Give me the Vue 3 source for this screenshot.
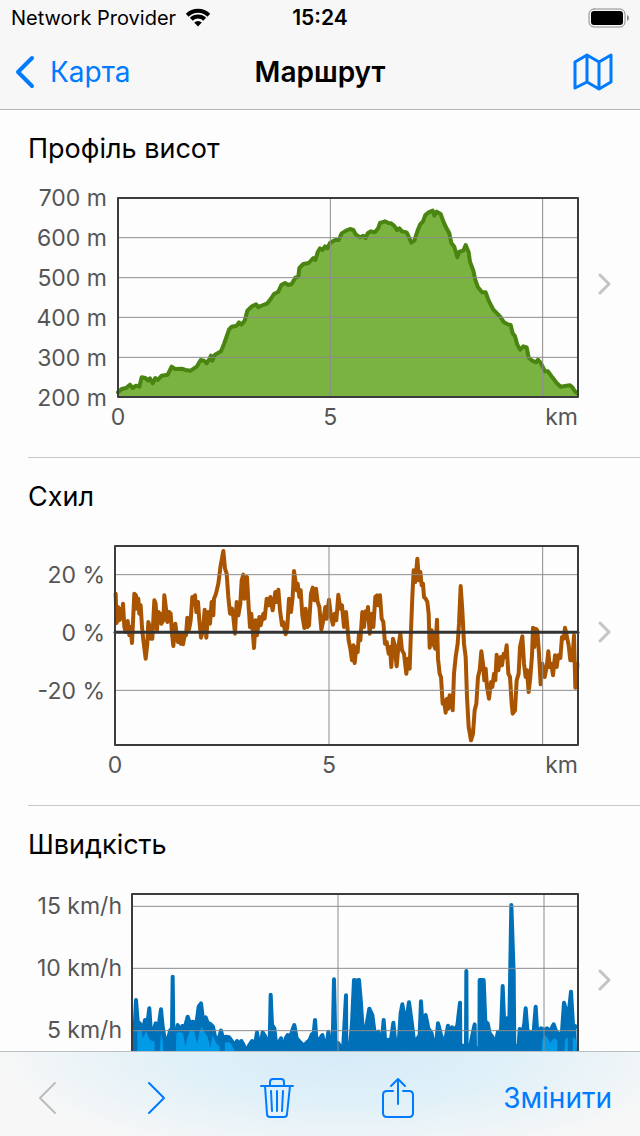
<script setup>
const elevationLine =
  '0,583 11,573 24,570 36,560 44,570 54,563 64,566 71,538 82,540 90,548 96,541 104,556 112,540 119,546 131,533 149,530 161,506 171,513 191,512 203,516 218,518 236,506 248,486 258,488 266,496 274,483 279,473 283,488 291,470 309,460 318,438 333,395 341,386 356,383 363,373 370,380 380,368 388,338 402,325 414,319 421,328 428,324 448,316 458,303 468,288 481,281 490,261 501,255 511,261 521,258 532,239 541,236 544,210 556,198 572,195 586,180 592,186 599,163 606,151 614,156 621,145 628,151 636,135 651,126 662,126 671,106 684,98 696,93 706,96 714,110 726,118 736,113 743,120 749,106 759,100 771,103 781,90 786,75 801,70 811,75 819,76 828,83 837,96 844,91 852,100 866,103 874,120 880,134 889,128 898,100 906,80 915,70 922,51 932,43 944,38 949,53 956,41 968,48 976,70 984,88 994,106 1000,135 1009,146 1018,178 1024,161 1036,158 1043,141 1052,163 1056,191 1066,218 1072,246 1080,268 1092,283 1103,283 1112,308 1126,335 1146,355 1158,373 1169,379 1178,381 1184,406 1191,415 1198,440 1206,455 1216,445 1226,448 1232,478 1242,488 1254,493 1260,485 1269,496 1281,520 1290,520 1303,538 1316,555 1328,566 1341,564 1356,562 1363,568 1371,580 1377,585'

const slopeLine =
  '2,143 5,231 9,183 13,223 17,188 21,218 24,173 28,243 32,258 38,225 43,268 47,243 51,291 58,143 63,148 66,188 70,158 73,203 77,178 81,243 85,283 92,338 97,293 100,228 104,243 107,278 112,278 118,163 122,173 126,251 130,198 135,203 139,233 145,223 148,148 153,188 157,228 162,198 167,203 171,263 175,300 181,233 185,268 189,288 193,268 197,293 201,263 204,295 210,263 213,268 217,215 222,251 227,223 232,153 236,173 240,148 244,198 249,168 253,223 258,275 264,253 269,191 274,275 279,198 285,233 290,168 295,208 297,158 303,143 310,113 317,58 325,15 330,68 335,83 340,153 345,203 351,188 355,213 360,263 365,168 370,208 376,173 380,103 385,86 388,158 391,103 396,93 401,183 405,243 409,203 413,253 417,306 422,223 426,268 433,213 437,238 445,203 449,218 455,158 461,178 466,153 473,193 481,138 485,168 490,131 495,193 501,238 505,228 512,265 517,243 522,158 528,198 533,153 537,75 541,103 545,133 548,113 553,153 557,133 562,208 568,246 572,188 577,243 582,238 588,143 593,125 598,163 603,128 608,168 613,183 619,251 625,223 631,183 635,218 642,161 648,213 654,236 659,203 664,223 670,146 676,188 681,178 687,243 693,198 701,283 706,308 711,343 715,298 719,351 724,303 728,318 732,263 736,283 742,198 747,243 752,196 756,218 759,183 764,263 771,203 775,243 781,153 786,148 789,178 795,148 800,218 805,228 810,293 815,288 821,323 825,303 829,363 834,278 839,298 845,361 850,303 856,263 861,313 867,323 874,383 879,338 884,368 888,253 892,153 896,73 901,108 907,38 912,103 916,78 920,118 924,113 927,153 932,158 937,168 941,203 944,305 950,253 955,293 961,308 966,221 969,338 974,383 978,393 983,473 987,463 992,500 996,458 1000,488 1004,448 1009,463 1013,493 1017,383 1022,333 1028,293 1032,233 1037,120 1042,193 1047,293 1052,333 1056,453 1061,543 1068,583 1074,563 1079,493 1084,473 1089,393 1094,373 1099,316 1104,353 1108,403 1112,368 1116,423 1122,458 1128,408 1132,423 1137,383 1141,403 1145,326 1150,373 1157,333 1161,358 1166,323 1170,333 1175,298 1180,383 1185,393 1190,473 1193,503 1200,493 1205,403 1211,383 1215,303 1222,271 1227,353 1232,393 1236,373 1241,438 1246,393 1251,328 1254,245 1258,303 1262,248 1267,253 1272,323 1277,415 1282,353 1289,393 1295,363 1300,316 1304,363 1309,353 1314,388 1320,328 1325,363 1330,328 1336,336 1341,273 1346,278 1350,245 1355,268 1361,298 1366,343 1370,313 1372,343 1377,268 1381,425 1385,393 1387,353'

const speedLine =
  '3,408 8,403 12,318 17,383 23,388 29,398 34,403 39,378 46,390 52,343 57,418 63,418 71,388 77,418 87,346 92,398 99,440 107,438 115,408 120,408 122,248 124,418 131,438 137,393 145,413 151,396 159,398 167,368 173,386 183,383 193,390 200,338 207,328 213,378 221,370 227,386 235,390 243,398 249,428 259,438 267,410 273,433 281,428 291,430 301,443 307,453 315,441 321,451 328,441 335,453 341,473 351,455 360,441 369,453 375,415 380,448 387,448 392,415 400,428 408,451 413,448 416,302 420,393 427,403 432,448 439,448 447,433 453,470 457,470 461,433 467,423 473,438 481,408 487,393 494,433 503,443 515,455 525,445 533,438 540,420 545,418 549,378 553,433 561,438 571,423 577,448 585,448 589,413 594,448 602,448 606,256 610,443 619,448 625,458 633,470 637,398 642,304 643,468 654,456 660,388 666,258 674,260 681,258 687,328 693,423 699,423 704,390 712,344 721,363 728,418 739,413 744,468 750,438 755,378 760,448 768,438 777,436 784,386 790,445 800,448 806,358 811,331 818,373 824,373 831,325 839,383 846,440 855,436 863,423 867,322 873,423 881,363 889,403 899,418 905,455 912,455 918,388 927,423 937,453 948,395 954,448 960,400 967,408 976,395 984,326 985,455 1002,455 1003,231 1004,455 1015,456 1020,428 1028,391 1029,463 1042,463 1043,258 1055,258 1060,383 1067,388 1073,418 1081,428 1088,458 1098,413 1107,413 1112,276 1117,398 1126,373 1132,388 1138,33 1145,238 1147,456 1160,456 1163,405 1171,418 1177,388 1181,343 1186,408 1196,418 1205,413 1211,338 1216,423 1227,403 1239,408 1245,403 1253,413 1265,391 1273,413 1283,423 1290,413 1296,326 1303,353 1309,368 1317,293 1323,393 1333,398'

// Calm stretches of the ride, where the samples stay close together.
const speedFills = [
  '16,597 16,408 28,408 33,433 42,412 54,438 68,443 69,597',
  '83,597 83,468 87,418 93,443 97,597',
  '129,597 133,418 143,413 153,418 160,458 167,428 175,408 187,413 196,450 201,418 209,398 219,418 227,428 235,463 241,423 253,448 263,458 265,597',
  '276,597 279,446 291,444 299,452 307,470 307,597',
  '1223,597 1231,438 1239,423 1247,433 1255,448 1265,433 1275,438 1281,597',
  '1293,597 1299,438 1307,428 1311,597',
  '1319,597 1323,428 1333,438 1333,597',
]

const H = 597

const charts = [
  {
    id: 'elevation',
    title: 'Профіль висот',
    width: 1380,
    yLabels: ['700 m', '600 m', '500 m', '400 m', '300 m', '200 m'],
    yGrid: [119, 239, 358, 478],
    xGrid: [637, 1274],
    line: elevationLine,
    area: true,
    fills: [],
    xLabels: true,
  },
  {
    id: 'slope',
    title: 'Схил',
    width: 1389,
    yLabels: ['20 %', '0 %', '-20 %'],
    yGrid: [86, 433],
    xGrid: [642, 1283],
    line: slopeLine,
    area: false,
    fills: [],
    zero: 259,
    xLabels: true,
  },
  {
    id: 'speed',
    title: 'Швидкість',
    width: 1338,
    yLabels: ['15 km/h', '10 km/h', '5 km/h'],
    yGrid: [37, 223, 410],
    xGrid: [618, 1236],
    line: speedLine,
    area: true,
    fills: speedFills,
    xLabels: false,
  },
]

const areaPoints = (c) => `0,${H} ${c.line} ${c.width},${H}`
const xColumns = (c) => ({ gridTemplateColumns: `${(c.xGrid[0] / c.width) * 100}% 1fr` })
</script>

<template>
  <div class="screen">
    <header class="top">
      <div class="status">
        <div class="carrier">
          <span>Network Provider</span>
          <svg class="wifi" viewBox="0 0 26 19" aria-hidden="true">
            <path d="M2.2 7.2A15.5 15.5 0 0 1 23.8 7.2" />
            <path d="M6.3 11.3A9.6 9.6 0 0 1 19.7 11.3" />
            <path class="dot" d="M13 18.4L9.2 14.6A5.4 5.4 0 0 1 16.8 14.6Z" />
          </svg>
        </div>
        <time>15:24</time>
        <svg class="battery" viewBox="0 0 41 20" aria-hidden="true">
          <rect class="shell" x="1" y="1" width="36" height="18" rx="5" />
          <rect x="3" y="3" width="32" height="14" rx="3" />
          <path class="cap" d="M39 7Q41 8 41 10T39 13Z" />
        </svg>
      </div>
      <nav class="nav">
        <a class="back" href="#map">
          <svg viewBox="0 0 20 34" aria-hidden="true"><path d="M17 3L3 17L17 31" /></svg>
          <span>Карта</span>
        </a>
        <h1>Маршрут</h1>
        <button class="map" type="button" aria-label="Карта">
          <svg viewBox="0 0 40 38" aria-hidden="true">
            <path d="M2 9L14 2L26 9L38 2V29L26 36L14 29L2 35ZM14 2V29M26 9V36" />
          </svg>
        </button>
      </nav>
    </header>

    <main class="list">
      <a v-for="c in charts" :key="c.id" class="row" :class="c.id" :href="'#' + c.id">
        <h2>{{ c.title }}</h2>
        <div class="chart">
          <div class="y-axis">
            <span v-for="label in c.yLabels" :key="label">{{ label }}</span>
          </div>
          <svg class="plot" :viewBox="`0 0 ${c.width} ${H}`" preserveAspectRatio="none" aria-hidden="true">
            <polygon v-if="c.area" class="area" :points="areaPoints(c)" />
            <polyline class="line" :points="c.line" />
            <polygon v-for="(f, i) in c.fills" :key="i" class="calm" :points="f" />
            <line v-for="y in c.yGrid" :key="'y' + y" class="grid" x1="0" :y1="y" :x2="c.width" :y2="y" />
            <line v-for="x in c.xGrid" :key="'x' + x" class="grid" :x1="x" y1="0" :x2="x" :y2="H" />
            <line v-if="c.zero" class="zero" x1="0" :y1="c.zero" :x2="c.width" :y2="c.zero" />
            <rect class="frame" x="0" y="0" :width="c.width" :height="H" />
          </svg>
          <div v-if="c.xLabels" class="x-axis" :style="xColumns(c)">
            <span class="tick">0</span>
            <div class="rest"><span class="tick">5</span><span>km</span></div>
          </div>
        </div>
        <svg class="disclosure" viewBox="0 0 14 22" aria-hidden="true"><path d="M2 2L11 11L2 20" /></svg>
      </a>
    </main>

    <footer class="toolbar">
      <button type="button" disabled aria-label="Назад">
        <svg class="chevron" viewBox="0 0 20 34" aria-hidden="true"><path d="M18 2L3 17L18 32" /></svg>
      </button>
      <button type="button" aria-label="Вперед">
        <svg class="chevron" viewBox="0 0 20 34" aria-hidden="true"><path d="M2 2L17 17L2 32" /></svg>
      </button>
      <button type="button" aria-label="Видалити">
        <svg class="trash" viewBox="0 0 36 42" aria-hidden="true">
          <path d="M2 9H34M6 9L8 37Q8 40 11 40H25Q28 40 28 37L31 9M11 9V5Q11 2 14 2H22Q25 2 25 5V9M12 14L13 34M18 14V34M24 14L23 34" />
        </svg>
      </button>
      <button type="button" aria-label="Поділитися">
        <svg class="share" viewBox="0 0 34 42" aria-hidden="true">
          <path d="M12 14H6Q2 14 2 18V36Q2 40 6 40H28Q32 40 32 36V18Q32 14 28 14H22M17 27V2M10 9L17 2L24 9" />
        </svg>
      </button>
      <button class="edit" type="button">Змінити</button>
    </footer>
  </div>
</template>

<style>
body {
  margin: 0;
  background: #fdfdfd;
}
</style>

<style scoped>
.screen {
  display: flex;
  flex-direction: column;
  height: 100vh;
  font-family: Inter, "Liberation Sans", sans-serif;
  color: #000;
}
svg {
  display: block;
  fill: none;
  stroke-linecap: round;
  stroke-linejoin: round;
}
a {
  color: inherit;
  text-decoration: none;
}
button {
  border: 0;
  padding: 0;
  background: none;
  font: inherit;
  color: #007aff;
}
h1,
h2 {
  margin: 0;
}

.top {
  flex: none;
  background: #f7f7f7;
  border-bottom: 1px solid #b4b4b4;
}
.status {
  display: grid;
  grid-template-columns: 1fr auto 1fr;
  align-items: center;
  height: 35px;
  padding: 0 11px;
  font-size: 20px;
}
.carrier {
  display: flex;
  align-items: center;
  gap: 9px;
}
.wifi {
  width: 26px;
  height: 19px;
  stroke: #000;
  stroke-width: 4;
  stroke-linecap: butt;
}
.wifi .dot {
  fill: #000;
  stroke: none;
}
.status time {
  font-size: 21px;
  font-weight: 600;
}
.battery {
  justify-self: end;
  width: 41px;
  height: 20px;
  fill: #000;
}
.battery .shell {
  fill: none;
  stroke: #8a8a8a;
  stroke-width: 1;
}
.battery .cap {
  fill: #8a8a8a;
}
.nav {
  display: grid;
  grid-template-columns: 1fr auto 1fr;
  align-items: center;
  height: 74px;
  padding: 0 15px;
  font-size: 28px;
}
.back {
  display: flex;
  align-items: center;
  gap: 15px;
  color: #007aff;
}
.back svg {
  width: 20px;
  height: 34px;
  stroke: #007aff;
  stroke-width: 4;
}
h1 {
  font-size: 28px;
  font-weight: 600;
}
.map {
  justify-self: end;
  margin-right: 12px;
}
.map svg {
  width: 40px;
  height: 38px;
  stroke: #007aff;
  stroke-width: 3;
}

.list {
  flex: 1;
  min-height: 0;
  overflow: hidden;
}
.row {
  display: grid;
  grid-template-columns: 1fr 62px;
  grid-template-rows: auto 1fr;
  min-height: 307px;
  margin-left: 28px;
  padding: 20px 0;
  border-bottom: 1px solid #c8c8c8;
}
h2 {
  grid-area: 1 / 1;
  margin-bottom: 30px;
  font-size: 27px;
  line-height: 38px;
  font-weight: 400;
}
.chart {
  grid-area: 2 / 1;
  display: grid;
  grid-template-columns: 90px 1fr;
  align-content: start;
  font-size: 23px;
  color: #555;
}
.slope .chart {
  grid-template-columns: 87px 1fr;
}
.speed .chart {
  grid-template-columns: 104px 1fr;
}
.y-axis {
  display: flex;
  flex-direction: column;
  height: 199px;
  margin-right: 11px;
  text-align: right;
  white-space: nowrap;
}
.elevation .y-axis {
  margin-top: -20px;
  margin-bottom: 20px;
  line-height: 40px;
}
.slope .y-axis {
  margin-right: 10px;
  line-height: 58px;
}
.speed .y-axis {
  margin-top: -19px;
  margin-right: 10px;
  margin-bottom: 19px;
  line-height: 62px;
}
.plot {
  width: 100%;
  height: 199px;
  overflow: visible;
}
.plot * {
  vector-effect: non-scaling-stroke;
}
.line {
  stroke-width: 4;
}
.elevation .line {
  stroke: #4a8511;
}
.elevation .area {
  fill: #7ab340;
}
.slope .line {
  stroke: #a85400;
}
.speed .line {
  stroke: #0070b8;
}
.speed .area {
  fill: #0070b8;
}
.calm {
  fill: #009ae6;
}
.grid {
  stroke: #8c8c8c;
  stroke-width: 1;
}
.zero {
  stroke: #333;
  stroke-width: 3;
}
.frame {
  stroke: #3c3c3c;
  stroke-width: 2;
}
.x-axis {
  grid-column: 2;
  display: grid;
  line-height: 40px;
}
.tick {
  width: 24px;
  margin-left: -12px;
  text-align: center;
}
.rest {
  display: flex;
  justify-content: space-between;
}
.disclosure {
  grid-area: 1 / 2 / 3 / 3;
  align-self: center;
  justify-self: center;
  width: 14px;
  height: 22px;
  margin-right: 8px;
  stroke: #c4c4c6;
  stroke-width: 3;
}

.toolbar {
  flex: none;
  display: grid;
  grid-template-columns: 94fr 126fr 114fr 128fr 178fr;
  align-items: center;
  justify-items: center;
  height: 76px;
  padding-top: 8px;
  border-top: 1px solid #b9bec1;
  background:
    radial-gradient(ellipse 55% 130% at 54% 0, #d6ebf8 0%, #dff0f8 45%, rgba(247, 247, 247, 0) 100%),
    #f7f7f7;
}
.toolbar svg {
  stroke: #007aff;
  stroke-width: 2;
}
.toolbar :disabled svg {
  stroke: #bcbcbc;
}
.chevron {
  width: 20px;
  height: 34px;
}
.trash {
  width: 36px;
  height: 42px;
}
.share {
  width: 34px;
  height: 42px;
}
.edit {
  justify-self: end;
  margin-right: 28px;
  font-size: 28px;
}
</style>
